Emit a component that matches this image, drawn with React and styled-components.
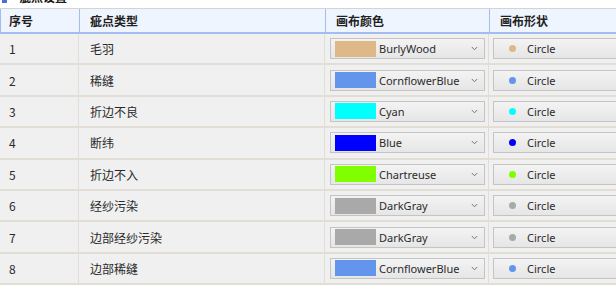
import React from "react";
import styled, { createGlobalStyle } from "styled-components";

const GlobalStyle = createGlobalStyle`
  html, body {
    margin: 0;
    padding: 0;
    background: #ffffff;
    overflow: hidden;
  }
  body {
    font-family: "Noto Sans CJK SC", "Noto Sans", sans-serif;
    font-size: 12px;
    color: #1a1a1a;
  }
`;

const COLS = "79px 246px 164px 1fr";

const defects = [
  { id: 1, name: "毛羽", color: "BurlyWood", hex: "#deb887" },
  { id: 2, name: "稀缝", color: "CornflowerBlue", hex: "#6495ed" },
  { id: 3, name: "折边不良", color: "Cyan", hex: "#00ffff" },
  { id: 4, name: "断纬", color: "Blue", hex: "#0000ff" },
  { id: 5, name: "折边不入", color: "Chartreuse", hex: "#7fff00" },
  { id: 6, name: "经纱污染", color: "DarkGray", hex: "#a9a9a9" },
  { id: 7, name: "边部经纱污染", color: "DarkGray", hex: "#a9a9a9" },
  { id: 8, name: "边部稀缝", color: "CornflowerBlue", hex: "#6495ed" },
];

const Page = styled.div`
  width: 700px;
  display: flex;
  flex-direction: column;
`;

// panel caption, mostly scrolled out above the grid
const Caption = styled.div`
  height: 8px;
  overflow: hidden;
  display: flex;
  align-items: flex-end;
  padding-left: 2px;
  gap: 12px;
`;

const CaptionInner = styled.div`
  display: flex;
  align-items: center;
  gap: 12px;
  height: 16px;
  margin-bottom: 4px;
  font-weight: bold;
  font-size: 12px;
`;

const CaptionIcon = styled.span`
  width: 5px;
  height: 9px;
  background: #4a6fd8;
  display: inline-block;
  margin-top: 4px;
`;

const Grid = styled.div`
  border-top: 1px solid #d4d4d4;
  display: flex;
  flex-direction: column;
`;

const HeaderRow = styled.div`
  display: grid;
  grid-template-columns: ${COLS};
  height: 23px;
  background: #eef5fe;
  border-bottom: 2px solid #a3bdf0;
  border-left: 1px solid #a3bdf0;
`;

const HeaderCell = styled.div`
  display: flex;
  align-items: center;
  padding-left: ${(p) => p.$pad || 8}px;
  font-weight: bold;
  font-size: 12px;
  color: #222;
  border-right: 1px solid #a3bdf0;
`;

const Row = styled.div`
  display: grid;
  grid-template-columns: ${COLS};
  height: 29.4px;
  background: #f0f0f0;
  border-bottom: 2px solid #e2ded6;
`;

const Cell = styled.div`
  display: flex;
  align-items: center;
  padding-left: ${(p) => p.$pad || 0}px;
  border-right: 1px solid #e2ded6;
  font-size: 12px;
  color: #2a2a2a;
`;

const Combo = styled.div`
  margin-left: ${(p) => p.$inset}px;
  width: ${(p) => p.$width};
  height: 21px;
  box-sizing: border-box;
  border: 1px solid #c4c4c4;
  background: linear-gradient(#f3f3f3, #e6e6e6);
  display: flex;
  align-items: center;
  font-family: "Noto Sans", "Noto Sans CJK SC", sans-serif;
  font-size: 11px;
  color: #2b2b2b;
`;

const Swatch = styled.span`
  width: 41px;
  height: 16px;
  margin-left: 4px;
  margin-right: 3px;
  background: ${(p) => p.$color};
`;

const ComboText = styled.span`
  flex: 1;
`;

const Chevron = styled.svg`
  width: 7px;
  height: 5px;
  margin-right: 6px;
`;

const Dot = styled.span`
  width: 7px;
  height: 7px;
  border-radius: 50%;
  background: ${(p) => p.$color};
  margin-left: 15px;
  margin-right: 11px;
`;

const App = () => (
  <>
    <GlobalStyle />
    <Page>
      <Caption>
        <CaptionInner>
          <CaptionIcon />
          <span>疵点设置</span>
        </CaptionInner>
      </Caption>
      <Grid>
        <HeaderRow>
          <HeaderCell>序号</HeaderCell>
          <HeaderCell $pad={10}>疵点类型</HeaderCell>
          <HeaderCell $pad={10}>画布颜色</HeaderCell>
          <HeaderCell $pad={10}>画布形状</HeaderCell>
        </HeaderRow>
        {defects.map((d) => (
          <Row key={d.id}>
            <Cell $pad={9}>{d.id}</Cell>
            <Cell $pad={11}>{d.name}</Cell>
            <Cell>
              <Combo $inset={5} $width="155px">
                <Swatch $color={d.hex} />
                <ComboText>{d.color}</ComboText>
                <Chevron viewBox="0 0 7 5">
                  <path d="M0.8 1 L3.5 3.8 L6.2 1" fill="none" stroke="#777" strokeWidth="1" />
                </Chevron>
              </Combo>
            </Cell>
            <Cell>
              <Combo $inset={4} $width="180px">
                <Dot $color={d.hex} />
                <ComboText>Circle</ComboText>
              </Combo>
            </Cell>
          </Row>
        ))}
      </Grid>
    </Page>
  </>
);

export default App;
